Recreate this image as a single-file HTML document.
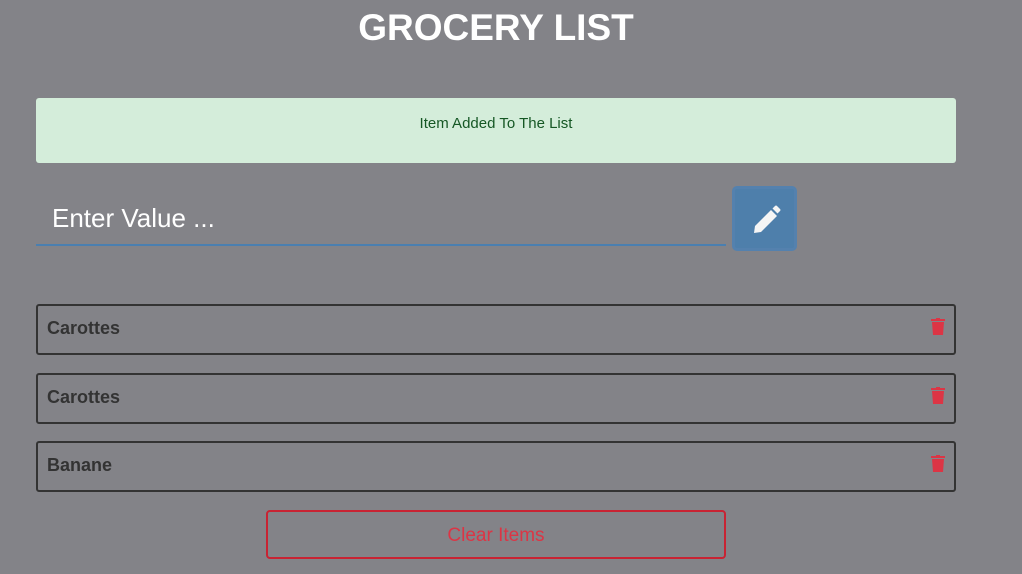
<!DOCTYPE html>
<html><head><style>
body{margin:0;width:1022px;height:574px;background:#838388;font-family:"Liberation Sans",sans-serif;position:relative;overflow:hidden}
h1{position:absolute;top:7px;left:0;width:992px;margin:0;text-align:center;color:#fff;font-size:37px;font-weight:bold;letter-spacing:0}
.alert{position:absolute;left:36px;top:98px;width:920px;height:65px;background:#d4edda;border-radius:3px;color:#155724;font-size:15px;text-align:center;line-height:52px}
.inp{position:absolute;left:36px;top:188px;width:690px;height:56px;border-bottom:2px solid #4a7fb0;color:#fff;font-size:26px;line-height:60px;text-indent:16px}
.btn{position:absolute;left:732px;top:186px;width:59px;height:59px;background:#4e7fab;border:3px solid #5481ae;border-radius:5px}
.item{position:absolute;left:36px;width:916px;height:47px;border:2px solid #333;border-radius:3px;color:#333;font-size:18px;font-weight:bold;line-height:44px;text-indent:9px}
.item svg{position:absolute;right:9px;top:12px}
.clear{position:absolute;left:266px;top:510px;width:456px;height:45px;border:2px solid #c82333;border-radius:4px;color:#dc3545;font-size:19px;text-align:center;line-height:48px}
</style></head><body>
<h1>GROCERY LIST</h1>
<div class="alert">Item Added To The List</div>
<div class="inp">Enter Value ...</div>
<div class="btn"><svg width="59" height="59" viewBox="0 0 59 59"><path d="M19 44 L20 37 L36 21 L42 27 L26 43 Z" fill="#f5f5f5"/><path d="M37.5 19.5 L40 17 Q41 16 42 17 L45 20 Q46 21 45 22 L42.5 24.5 Z" fill="#f5f5f5"/></svg></div>
<div class="item" style="top:304px">Carottes<svg width="14" height="17" viewBox="0 0 14 17"><rect x="0" y="1" width="14" height="2" fill="#dc3545"/><rect x="5" y="0" width="4" height="2" fill="#dc3545"/><path d="M1 4 H13 L12 17 H2 Z" fill="#dc3545"/></svg></div>
<div class="item" style="top:373px">Carottes<svg width="14" height="17" viewBox="0 0 14 17"><rect x="0" y="1" width="14" height="2" fill="#dc3545"/><rect x="5" y="0" width="4" height="2" fill="#dc3545"/><path d="M1 4 H13 L12 17 H2 Z" fill="#dc3545"/></svg></div>
<div class="item" style="top:441px">Banane<svg width="14" height="17" viewBox="0 0 14 17"><rect x="0" y="1" width="14" height="2" fill="#dc3545"/><rect x="5" y="0" width="4" height="2" fill="#dc3545"/><path d="M1 4 H13 L12 17 H2 Z" fill="#dc3545"/></svg></div>
<div class="clear">Clear Items</div>
</body></html>
